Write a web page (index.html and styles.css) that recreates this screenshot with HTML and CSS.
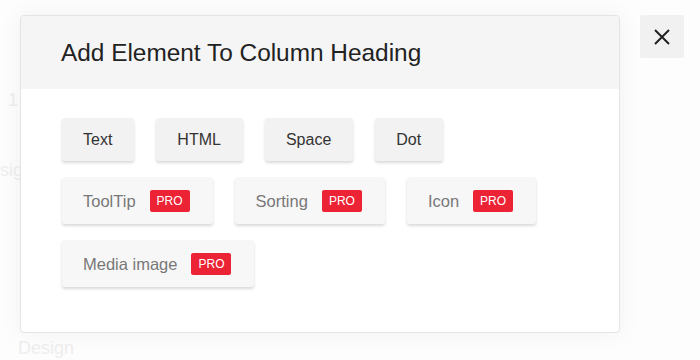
FILE: index.html
```html
<!DOCTYPE html>
<html lang="en">
<head>
  <meta charset="UTF-8">
  <meta name="viewport" content="width=device-width, initial-scale=1.0">
  <title>Add Element To Column Heading</title>
  <link rel="stylesheet" href="styles.css">
</head>
<body>
<div class="page">
  <div class="page-num">1</div>
  <div class="page-label page-label-cut">sig</div>
  <div class="page-label page-label-bottom">Design</div>
</div>

<div class="overlay">
  <div class="modal">
    <div class="modal-header">
      <h2>Add Element To Column Heading</h2>
    </div>
    <div class="modal-body">
      <div class="row">
        <button class="el-btn">Text</button>
        <button class="el-btn">HTML</button>
        <button class="el-btn">Space</button>
        <button class="el-btn">Dot</button>
      </div>
      <div class="row">
        <button class="el-btn pro">ToolTip <span class="badge">PRO</span></button>
        <button class="el-btn pro">Sorting <span class="badge">PRO</span></button>
        <button class="el-btn pro">Icon <span class="badge">PRO</span></button>
      </div>
      <div class="row">
        <button class="el-btn pro">Media image <span class="badge">PRO</span></button>
      </div>
    </div>
  </div>

  <button class="close-btn" aria-label="Close">
    <svg width="18" height="18" viewBox="0 0 18 18"><path d="M2 2 L16 16 M16 2 L2 16" stroke="#222" stroke-width="2" fill="none"/></svg>
  </button>
</div>
</body>
</html>
```

FILE: styles.css
```css
body { margin: 0; font-family: "Liberation Sans", Arial, sans-serif; background: #fdfdfd; width: 700px; height: 360px; overflow: hidden; position: relative; }

/* faded page behind the overlay */
.page { color: #eeeeee; }
.page-num { position: absolute; left: 8px; top: 90px; font-size: 18px; }
.page-label { position: absolute; font-size: 18px; }
.page-label-cut { left: 0; top: 160px; }
.page-label-bottom { left: 18px; top: 338px; }

.overlay { position: absolute; left: 0; top: 0; right: 0; bottom: 0; display: flex; align-items: flex-start; padding: 15px 0 0 20px; }

.modal { width: 598px; background: #fff; border: 1px solid #e4e4e4; border-radius: 4px; box-shadow: 0 0 25px rgba(0,0,0,0.05); overflow: hidden; }
.modal-header { background: #f5f5f5; height: 73px; display: flex; align-items: center; padding: 0 40px; }
.modal-header h2 { margin: 0; font-size: 24.4px; font-weight: normal; color: #222; padding-top: 1px; }
.modal-body { padding: 29px 41px 45px; display: flex; flex-direction: column; gap: 16px; }

.row { display: flex; gap: 22px; }
.el-btn { font-family: inherit; font-size: 16px; line-height: 19px; color: #333; background: #f2f2f2; border: none; border-radius: 3px; padding: 12px 22px 12px 21px; box-shadow: 0 2px 3px rgba(0,0,0,0.15); cursor: pointer; display: flex; align-items: center; }
.el-btn.pro { color: #777; background: #f7f7f7; padding: 13px 23px 12px 21px; font-size: 16.5px; }
.badge { display: inline-block; background: #ec2335; color: #fff; font-size: 12px; line-height: 22px; padding: 0 7px; border-radius: 2px; margin-left: 14px; }

.close-btn { margin-left: 20px; width: 44px; height: 43px; border: none; background: #f1f1f1; border-radius: 2px; display: flex; align-items: center; justify-content: center; padding: 0; cursor: pointer; }
```
